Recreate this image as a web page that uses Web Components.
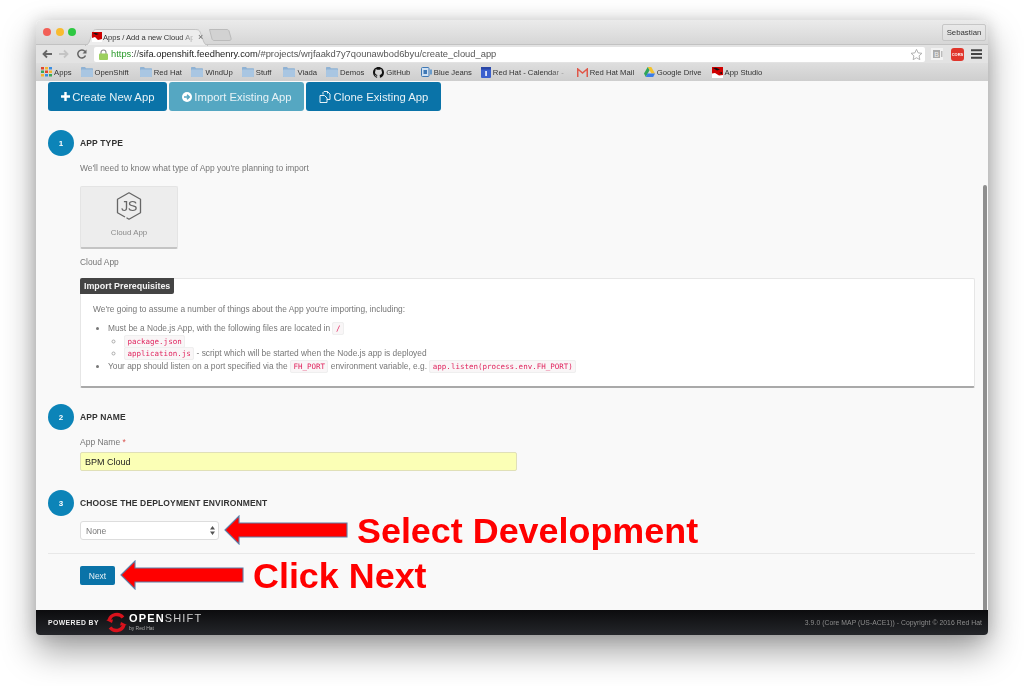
<!DOCTYPE html>
<html lang="en">
<head>
<meta charset="UTF-8">
<title>Apps / Add a new Cloud App</title>
<style>
  html, body { margin: 0; background: #fff; }
  body { width: 1024px; height: 686px; overflow: hidden; font-family: "Liberation Sans", Arial, sans-serif; }
  info-panel ul ul { margin: 0; padding-left: 16px; list-style: circle; }
  info-panel ul ul li::marker { color: #aaa; }
</style>
</head>
<body>
<browser-window>
  <tab-strip slot="chrome"></tab-strip>
  <tool-bar slot="chrome"></tool-bar>
  <bookmark-bar slot="chrome">
    <book-mark icon="apps" style="margin-right:9px">Apps</book-mark>
    <book-mark icon="folder" style="margin-right:11px">OpenShift</book-mark>
    <book-mark icon="folder" style="margin-right:9.5px">Red Hat</book-mark>
    <book-mark icon="folder" style="margin-right:9px">WindUp</book-mark>
    <book-mark icon="folder" style="margin-right:12px">Stuff</book-mark>
    <book-mark icon="folder" style="margin-right:9px">Viada</book-mark>
    <book-mark icon="folder" style="margin-right:9px">Demos</book-mark>
    <book-mark icon="github" style="margin-right:10.5px">GitHub</book-mark>
    <book-mark icon="bluejeans" style="margin-right:9px">Blue Jeans</book-mark>
    <book-mark icon="calendar" style="margin-right:13px" fade>Red Hat - Calendar -</book-mark>
    <book-mark icon="gmail" style="margin-right:9.5px">Red Hat Mail</book-mark>
    <book-mark icon="drive" style="margin-right:10px">Google Drive</book-mark>
    <book-mark icon="redhat">App Studio</book-mark>
  </bookmark-bar>

  <app-page>
    <button-row>
      <action-btn icon="plus">Create New App</action-btn>
      <action-btn icon="circle-arrow" active>Import Existing App</action-btn>
      <action-btn icon="clone">Clone Existing App</action-btn>
    </button-row>

    <step-section num="1" title="App Type" style="margin-top:19px">
      <muted-text style="margin-top:6px">We'll need to know what type of App you're planning to import</muted-text>
      <type-card>Cloud App</type-card>
      <muted-text style="margin-top:7px">Cloud App</muted-text>
      <info-panel heading="Import Prerequisites">
        <p>We're going to assume a number of things about the App you're importing, including:</p>
        <ul>
          <li>Must be a Node.js App, with the following files are located in <code-tag>/</code-tag>
            <ul>
              <li><code-tag>package.json</code-tag></li>
              <li><code-tag>application.js</code-tag> - script which will be started when the Node.js app is deployed</li>
            </ul>
          </li>
          <li>Your app should listen on a port specified via the <code-tag>FH_PORT</code-tag> environment variable, e.g. <code-tag>app.listen(process.env.FH_PORT)</code-tag></li>
        </ul>
      </info-panel>
    </step-section>

    <step-section num="2" title="App Name" style="margin-top:16px">
      <name-field label="App Name" value="BPM Cloud"></name-field>
    </step-section>

    <step-section num="3" title="Choose the Deployment Environment" style="margin-top:19px">
      <env-select value="None"></env-select>
    </step-section>

    <next-row>Next</next-row>

    <red-callout slot="over" tip-x="189" tip-y="449" shaft="108" text-x="321">Select Development</red-callout>
    <red-callout slot="over" tip-x="85" tip-y="494" shaft="108" text-x="217">Click Next</red-callout>
  </app-page>

  <page-footer></page-footer>
</browser-window>

<script>
  function shadow(el, html) {
    el.attachShadow({ mode: 'open' });
    el.shadowRoot.innerHTML = html;
  }

  class BrowserWindow extends HTMLElement {
    constructor() {
      super();
      shadow(this, `
        <style>
          :host {
            display: flex;
            flex-direction: column;
            width: 952px;
            height: 615px;
            margin: 20px 0 0 36px;
            border-radius: 5px 5px 4px 4px;
            box-shadow: 0 16px 34px rgba(0,0,0,.38), 0 0 16px rgba(0,0,0,.14);
          }
          .wrap { display: flex; flex-direction: column; flex: 1; min-height: 0; border-radius: inherit; overflow: hidden; filter: blur(.45px); }
          .chrome { display: block; }
        </style>
        <div class="wrap">
          <div class="chrome"><slot name="chrome"></slot></div>
          <slot></slot>
        </div>`);
    }
  }

  class TabStrip extends HTMLElement {
    constructor() {
      super();
      shadow(this, `
        <style>
          :host {
            display: flex;
            align-items: flex-end;
            position: relative;
            z-index: 1;
            height: 24px;
            background: linear-gradient(#ebebeb, #d6d6d6);
            font-size: 7.800px;
            color: #333;
          }
          .lights { display: flex; gap: 4.500px; margin: 0 0 8px 7px; }
          .lights i { width: 8px; height: 8px; border-radius: 50%; display: block; }
          .tab { position: relative; width: 123px; height: 16px; margin: 0 0 -1px 9px; display: flex; align-items: center; font-size: 7.550px; }
          .tab svg.bg { position: absolute; inset: 0; }
          .fav { position: relative; width: 10px; height: 10px; margin-left: 7px; flex: none; }
          .label { position: relative; width: 90px; margin-left: 1px; white-space: nowrap;
            -webkit-mask-image: linear-gradient(90deg, #000 86%, rgba(0,0,0,.25)); }
          .x { position: relative; margin-left: 5px; font-size: 9px; color: #666; }
          .new { margin: 0 0 3px 1px; display: block; }
          .user { margin: 0 2px 3px auto; width: 44px; height: 17px; box-sizing: border-box; border: 1px solid #c6c6c6; border-radius: 2px;
            display: flex; align-items: center; justify-content: center; background: linear-gradient(#e9e9e9, #dedede); }
        </style>
        <div class="lights">
          <i style="background:#f25f57"></i><i style="background:#f8bb30"></i><i style="background:#2ec842"></i>
        </div>
        <div class="tab">
          <svg class="bg" width="123" height="17" viewBox="0 0 125 17" preserveAspectRatio="none">
            <path d="M0 16.500C3 16 4 14 5 11L8 3C9 1 10 .5 12 .5H112C115 .5 116 1 117 3L120 11C121 14 122 16 125 16.500V17H0Z" fill="#ededed" stroke="#b9b9b9" stroke-width=".8"/>
            <rect x="1" y="16" width="123" height="1" fill="#e3e3e3"/>
          </svg>
          <svg class="fav" viewBox="0 0 10 10"><rect width="10" height="10" fill="#fff"/><path d="M0 0H10V7L6 8 3 5 0 6Z" fill="#c00"/><path d="M1 1 4 3 7 2 4 1Z" fill="#111"/></svg>
          <span class="label">Apps / Add a new Cloud Ap</span>
          <span class="x">&#215;</span>
        </div>
        <svg class="new" width="23" height="12" viewBox="0 0 23 12"><path d="M.5 .5H18C19 .5 19.500 1 20 2L22 9C22.400 10.500 22 11.500 20 11.500H5C4 11.500 3.500 11 3 10Z" fill="#d2d2d2" stroke="#bbb"/></svg>
        <div class="user">Sebastian</div>`);
    }
  }

  class ToolBar extends HTMLElement {
    constructor() {
      super();
      shadow(this, `
        <style>
          :host {
            display: flex;
            align-items: center;
            height: 19px;
            background: #e3e3e3;
            border-top: 1px solid #c2c2c2;
            box-sizing: border-box;
          }
          svg { display: block; flex: none; }
          .url {
            position: relative;
            display: flex;
            align-items: center;
            width: 831px;
            height: 15px;
            margin-left: 7px;
            background: #fff;
            border-radius: 2px;
            box-sizing: border-box;
            padding-left: 5px;
            font-size: 9.350px;
            color: #555;
            white-space: nowrap;
          }
          .url b { font-weight: normal; color: #2a9a2a; }
          .url em { font-style: normal; color: #222; }
          .url .star { position: absolute; right: 2px; top: 1px; }
        </style>
        <svg style="margin-left:6px" width="10" height="10" viewBox="0 0 10 10"><path d="M10 5H2M5 1.500 1.500 5 5 8.500" fill="none" stroke="#666" stroke-width="1.800"/></svg>
        <svg style="margin-left:7px" width="10" height="10" viewBox="0 0 10 10"><path d="M0 5H8M5 1.500 8.500 5 5 8.500" fill="none" stroke="#c4c4c4" stroke-width="1.800"/></svg>
        <svg style="margin-left:8px" width="10" height="10" viewBox="0 0 10 10"><path d="M8.500 6.500A4 4 0 1 1 8 2.500" fill="none" stroke="#666" stroke-width="1.500"/><path d="M9.500 .5V4.500H5.500Z" fill="#666"/></svg>
        <div class="url">
          <svg width="9" height="11" viewBox="0 0 9 11"><path d="M2 5V3.500A2.500 2.500 0 0 1 7 3.500V5" fill="none" stroke="#8a8a8a" stroke-width="1.100"/><rect y="4.500" width="9" height="6.500" rx="1" fill="#9ccf5f"/></svg>
          <span style="margin-left:3px"><b>https</b>://<em>sifa.openshift.feedhenry.com</em>/#projects/wrjfaakd7y7qounawbod6byu/create_cloud_app</span>
          <svg class="star" width="13" height="13" viewBox="0 0 24 24"><path d="M12 2.500 15 9l7 .8-5.200 4.700 1.400 7-6.200-3.500L5.800 21.500l1.400-7L2 9.800 9 9Z" fill="#fff" stroke="#aaa" stroke-width="1.700"/></svg>
        </div>
        <svg style="margin-left:6px" width="12" height="12" viewBox="0 0 12 12"><rect width="12" height="12" fill="#f2f2f2"/><rect x="2" y="2" width="7" height="8" fill="#aaa"/><text x="5.500" y="8.500" text-anchor="middle" font-family="Liberation Sans, sans-serif" font-size="7" fill="#eee">B</text><rect x="10" y="3" width="1.500" height="6" fill="#bbb"/></svg>
        <svg style="margin-left:8px" width="13" height="13" viewBox="0 0 13 13"><rect width="13" height="13" rx="3" fill="#e0352b"/><text x="6.500" y="8.200" text-anchor="middle" font-family="Liberation Sans, sans-serif" font-size="4" font-weight="bold" fill="#fff">CORS</text></svg>
        <svg style="margin-left:7px" width="11" height="10" viewBox="0 0 11 10"><path d="M0 1.250H11M0 5H11M0 8.750H11" stroke="#444" stroke-width="1.800"/></svg>`);
    }
  }

  class BookmarkBar extends HTMLElement {
    constructor() {
      super();
      shadow(this, `
        <style>
          :host {
            display: flex;
            align-items: center;
            height: 18px;
            padding-left: 5px;
            background: linear-gradient(#dedede, #cecece);
            font-size: 7.700px;
            color: #333;
            white-space: nowrap;
          }
        </style>
        <slot></slot>`);
    }
  }

  const BOOKMARK_ICONS = {
    apps: `<svg width="11" height="10" viewBox="0 0 11 10"><g>
      <rect width="3" height="2.500" fill="#e0452c"/><rect x="4" width="3" height="2.500" fill="#f3b52f"/><rect x="8" width="3" height="2.500" fill="#3a8de0"/>
      <rect y="3.500" width="3" height="2.500" fill="#3aa757"/><rect x="4" y="3.500" width="3" height="2.500" fill="#e0452c"/><rect x="8" y="3.500" width="3" height="2.500" fill="#f3b52f"/>
      <rect y="7" width="3" height="2.500" fill="#f3b52f"/><rect x="4" y="7" width="3" height="2.500" fill="#3a8de0"/><rect x="8" y="7" width="3" height="2.500" fill="#3aa757"/></g></svg>`,
    folder: `<svg width="12" height="10" viewBox="0 0 12 10"><path d="M0 1C0 .4.400 0 1 0H4L5 1.200H11C11.600 1.200 12 1.600 12 2.200V9.200C12 9.700 11.600 10 11 10H1C.4 10 0 9.700 0 9.200Z" fill="#8fb2d4"/><rect y="2.500" width="12" height="7.500" rx="1" fill="#a9c6e2"/></svg>`,
    github: `<svg width="11" height="11" viewBox="0 0 16 16"><path fill="#111" d="M8 0C3.580 0 0 3.580 0 8c0 3.540 2.290 6.530 5.470 7.590.4.070.55-.17.55-.38 0-.19-.01-.82-.01-1.490-2.010.37-2.530-.49-2.690-.94-.09-.23-.48-.94-.82-1.130-.28-.15-.68-.52-.01-.53.63-.01 1.080.58 1.230.82.720 1.210 1.870.87 2.330.66.070-.52.280-.87.510-1.070-1.780-.2-3.640-.89-3.640-3.950 0-.87.310-1.590.820-2.150-.08-.2-.36-1.020.08-2.120 0 0 .67-.21 2.200.82.640-.18 1.320-.27 2-.27s1.360.09 2 .27c1.530-1.040 2.200-.82 2.200-.82.440 1.100.160 1.920.080 2.120.51.560.82 1.270.82 2.150 0 3.070-1.870 3.750-3.650 3.950.29.250.54.730.54 1.480 0 1.070-.01 1.930-.01 2.200 0 .21.150.46.550.38A8.010 8.010 0 0 0 16 8c0-4.420-3.580-8-8-8z"/></svg>`,
    bluejeans: `<svg width="11" height="10" viewBox="0 0 11 10"><rect x=".5" y=".5" width="7.500" height="9" rx="1" fill="#cfe0f2" stroke="#3f78b5"/><rect x="2.500" y="3" width="3.500" height="4" fill="#3f78b5"/><rect x="9" y="2.500" width="2" height="5" fill="#6a9ccc"/></svg>`,
    calendar: `<svg width="10" height="11" viewBox="0 0 10 11"><rect width="10" height="11" rx="1" fill="#3a5fcd"/><rect y="0" width="10" height="2.500" fill="#2a47a6"/><rect x="4.300" y="4" width="1.500" height="5" fill="#fff"/></svg>`,
    gmail: `<svg width="11" height="9" viewBox="0 0 11 9"><path d="M.75 9V1L5.500 5 10.250 1V9" fill="none" stroke="#e0584a" stroke-width="1.500"/></svg>`,
    drive: `<svg width="11" height="10" viewBox="0 0 11 10"><path d="M3.700 0H7.300L11 6.500H7.400Z" fill="#f4c32c"/><path d="M3.700 0 0 6.500 1.800 10 5.500 3.300Z" fill="#2fa55a"/><path d="M3.500 6.500H11L9.200 10H1.800Z" fill="#3b7de8"/></svg>`,
    redhat: `<svg width="11" height="11" viewBox="0 0 11 11"><rect width="11" height="11" fill="#fff"/><path d="M0 0H11V8L7 8.500 3 6 0 6.500Z" fill="#d00000"/><path d="M1 1 5 3.500 8 2.500 4 .8ZM7 6 10 7 10 5Z" fill="#111"/></svg>`
  };

  class BookMark extends HTMLElement {
    constructor() {
      super();
      const icon = BOOKMARK_ICONS[this.getAttribute('icon')] || '';
      shadow(this, `
        <style>
          :host { display: inline-flex; align-items: center; gap: 2px; }
          svg { display: block; flex: none; }
          :host([fade]) span { -webkit-mask-image: linear-gradient(90deg, #000 80%, rgba(0,0,0,.3)); }
        </style>
        ${icon}<span><slot></slot></span>`);
    }
  }

  class AppPage extends HTMLElement {
    constructor() {
      super();
      shadow(this, `
        <style>
          :host {
            display: flex;
            flex: 1;
            min-height: 0;
            position: relative;
            background: #f9f9f9;
          }
          .main { flex: 1; min-width: 0; padding: 1px 0 0 12px; box-sizing: border-box; color: #777; }
          .track { width: 5px; position: relative; }
          .thumb { position: absolute; left: 0; right: 1px; top: 104px; bottom: 0; background: #8f8f8f; border-radius: 3px 3px 0 0; }
        </style>
        <div class="main"><slot></slot></div>
        <div class="track"><div class="thumb"></div></div>
        <slot name="over"></slot>`);
    }
  }

  class ButtonRow extends HTMLElement {
    constructor() {
      super();
      shadow(this, `<style>:host { display: flex; gap: 2px; }</style><slot></slot>`);
    }
  }

  const BTN_ICONS = {
    plus: `<svg width="9" height="9" viewBox="0 0 9 9"><path d="M4.500 0V9M0 4.500H9" stroke="#fff" stroke-width="2.400"/></svg>`,
    'circle-arrow': `<svg width="10" height="10" viewBox="0 0 10 10"><circle cx="5" cy="5" r="5" fill="#fff"/><path d="M2 5H7M5 2.700 7.300 5 5 7.300" fill="none" stroke="#55a7c2" stroke-width="1.500"/></svg>`,
    clone: `<svg width="12" height="12" viewBox="0 0 12 12"><g fill="none" stroke="#fff" stroke-width=".9"><path d="M4 3.500V1.500L5 .5H8.500V2.500M8.500 .5 11 3V8.500H8"/><path d="M1 4.500H5.500L8 7V11.500H1Z"/></g></svg>`
  };

  class ActionBtn extends HTMLElement {
    constructor() {
      super();
      shadow(this, `
        <style>
          :host {
            display: inline-flex;
            align-items: center;
            gap: 2.500px;
            height: 29px;
            padding: 0 12.700px;
            background: #0a73a8;
            color: #e6f1f6;
            border-radius: 3px;
            font-size: 11.300px;
            white-space: nowrap;
          }
          :host([active]) { background: #55a7c2; color: #e6f2f6; }
          svg { display: block; }
        </style>
        ${BTN_ICONS[this.getAttribute('icon')]}<slot></slot>`);
    }
  }

  class StepSection extends HTMLElement {
    constructor() {
      super();
      shadow(this, `
        <style>
          :host {
            display: grid;
            grid-template-columns: 26px 1fr;
            column-gap: 6px;
            margin-right: 8px;
          }
          .num {
            width: 26px;
            height: 26px;
            border-radius: 50%;
            background: #0c84b8;
            color: #fff;
            font-size: 8px;
            font-weight: bold;
            display: flex;
            align-items: center;
            justify-content: center;
          }
          .title {
            font-size: 8.500px;
            font-weight: bold;
            letter-spacing: .14px;
            text-transform: uppercase;
            color: #333;
            line-height: 26px;
          }
          .body { grid-column: 2; min-width: 0; }
        </style>
        <div class="num">${this.getAttribute('num')}</div>
        <div class="title">${this.getAttribute('title')}</div>
        <div class="body"><slot></slot></div>`);
    }
  }

  class MutedText extends HTMLElement {
    constructor() {
      super();
      shadow(this, `<style>:host { display: block; font-size: 8.420px; line-height: 12px; color: #777; }</style><slot></slot>`);
    }
  }

  class TypeCard extends HTMLElement {
    constructor() {
      super();
      shadow(this, `
        <style>
          :host {
            display: flex;
            flex-direction: column;
            align-items: center;
            box-sizing: border-box;
            width: 98px;
            height: 63px;
            margin-top: 12px;
            padding-top: 5px;
            background: #ededed;
            border: 1px solid #e4e4e4;
            border-bottom: 2px solid #c4c4c4;
            border-radius: 2px;
            font-size: 7.900px;
            color: #8a8a8a;
          }
          svg { display: block; }
          span { margin-top: 8px; }
        </style>
        <svg width="26" height="28" viewBox="0 0 26 28">
          <path d="M9 25 1.500 20.800V7.300L13 .8 24.500 7.300V20.800L13 27.200 10.500 25.800" fill="none" stroke="#666" stroke-width="1.300" stroke-linejoin="round"/>
          <text x="13" y="19.200" text-anchor="middle" font-family="Liberation Sans, sans-serif" font-size="14.500" letter-spacing="-.5" fill="#666">JS</text>
        </svg>
        <span><slot></slot></span>`);
    }
  }

  class InfoPanel extends HTMLElement {
    constructor() {
      super();
      shadow(this, `
        <style>
          :host {
            display: block;
            box-sizing: border-box;
            height: 110px;
            margin-top: 10px;
            background: #fff;
            border: 1px solid #e6e6e6;
            border-bottom: 2px solid #a9a9a9;
            border-radius: 2px;
            font-size: 8.370px;
            color: #777;
          }
          .badge {
            display: inline-block;
            height: 16px;
            line-height: 16px;
            padding: 0 4px;
            margin: -1px 0 0 -1px;
            background: #444;
            color: #f4f4f4;
            font-size: 8.900px;
            font-weight: bold;
            border-radius: 2px 0 2px 0;
            vertical-align: top;
          }
          ::slotted(p) { margin: 9px 0 0 12px; line-height: 12px; }
          ::slotted(ul) { margin: 7px 0 0 12px; padding-left: 15px; line-height: 12.600px; }
        </style>
        <div class="badge">${this.getAttribute('heading')}</div>
        <slot></slot>`);
    }
  }

  class CodeTag extends HTMLElement {
    constructor() {
      super();
      shadow(this, `
        <style>
          :host {
            display: inline;
            font-family: "DejaVu Sans Mono", "Liberation Mono", monospace;
            font-size: 7.500px;
            line-height: 0;
            padding: 1px 2.500px;
            color: #e0245e;
            background: #f9f6f7;
            border: 1px solid #efefef;
            border-radius: 2px;
          }
        </style>
        <slot></slot>`);
    }
  }

  class NameField extends HTMLElement {
    constructor() {
      super();
      shadow(this, `
        <style>
          :host { display: block; margin-top: 6px; font-size: 8.500px; color: #777; }
          label { display: block; line-height: 12px; }
          label i { font-style: normal; color: #d9534f; }
          input {
            display: block;
            box-sizing: border-box;
            width: 437px;
            height: 19px;
            margin-top: 4px;
            padding: 0 4px;
            background: #fbffb6;
            border: 1px solid #e0e0b8;
            border-radius: 2px;
            font: 9px "Liberation Sans", Arial, sans-serif;
            color: #222;
          }
        </style>
        <label>${this.getAttribute('label')} <i>*</i></label>
        <input type="text" value="${this.getAttribute('value')}">`);
    }
  }

  class EnvSelect extends HTMLElement {
    constructor() {
      super();
      shadow(this, `
        <style>
          :host {
            display: flex;
            align-items: center;
            justify-content: space-between;
            box-sizing: border-box;
            width: 139px;
            height: 19px;
            margin-top: 5px;
            padding: 0 3px 0 5px;
            background: #fff;
            border: 1px solid #ddd;
            border-radius: 3px;
            font-size: 8.500px;
            color: #777;
          }
          svg { display: block; }
        </style>
        <span>${this.getAttribute('value')}</span>
        <svg width="5" height="9" viewBox="0 0 5 9"><path d="M2.500 0 5 3.500H0ZM2.500 9 5 5.500H0Z" fill="#555"/></svg>`);
    }
  }

  class NextRow extends HTMLElement {
    constructor() {
      super();
      shadow(this, `
        <style>
          :host {
            display: block;
            margin: 13px 8px 0 0;
            padding: 12px 0 0 32px;
            border-top: 1px solid #e8e8e8;
          }
          span {
            display: flex;
            align-items: center;
            justify-content: center;
            width: 35px;
            height: 19px;
            background: #0a73a8;
            color: #e6f1f6;
            border-radius: 2px;
            font-size: 8.500px;
          }
        </style>
        <span><slot></slot></span>`);
    }
  }

  // red annotation drawn over the screenshot: arrow plus label
  class RedCallout extends HTMLElement {
    constructor() {
      super();
      const x = +this.getAttribute('tip-x');
      const y = +this.getAttribute('tip-y');
      const len = +this.getAttribute('shaft') + 14;
      const textX = +this.getAttribute('text-x');
      shadow(this, `
        <style>
          :host { display: block; position: absolute; left: 0; top: 0; }
          svg { position: absolute; left: ${x - 1}px; top: ${y - 15}px; }
          span {
            position: absolute;
            left: ${textX}px;
            top: ${y - 20}px;
            font: bold 35.900px/42px "Liberation Sans", Arial, sans-serif;
            color: #f00;
            white-space: nowrap;
          }
        </style>
        <svg width="${len + 2}" height="30" viewBox="0 0 ${len + 2} 30">
          <path d="M1 15 15 1V8H${len + 1}V22H15V29Z" fill="#f00" stroke="#5d7fa8" stroke-width="1.100"/>
        </svg>
        <span><slot></slot></span>`);
    }
  }

  class PageFooter extends HTMLElement {
    constructor() {
      super();
      shadow(this, `
        <style>
          :host {
            display: flex;
            align-items: center;
            flex: none;
            height: 25px;
            padding: 0 6px 0 12px;
            background: linear-gradient(#0c0c0e, #24262a);
            color: #eee;
          }
          .by { font-size: 6.800px; font-weight: bold; letter-spacing: .45px; white-space: nowrap; }
          svg { display: block; margin-left: 7px; }
          .logo { margin-left: 2px; line-height: 1; }
          .name { display: block; font-size: 11px; letter-spacing: 1.150px; color: #fff; font-weight: bold; margin-top: -1px; }
          .name i { font-style: normal; font-weight: normal; color: #ccc; }
          .small { display: block; font-size: 5px; color: #aaa; margin-top: 2px; }
          .ver { margin-left: auto; font-size: 6.800px; color: #8d8d8d; white-space: nowrap; letter-spacing: .05px; }
        </style>
        <span class="by">POWERED BY</span>
        <svg width="21" height="21" viewBox="0 0 21 21">
          <g fill="none" stroke="#d8121c" stroke-width="3.400">
            <path d="M3 8.500A8 8 0 0 1 17 5.500"/>
            <path d="M18 12.500A8 8 0 0 1 4 15.500"/>
          </g>
          <path d="M0 8 7 7.500 6 11ZM21 13 14 13.500 15 10Z" fill="#d8121c"/>
        </svg>
        <span class="logo"><span class="name">OPEN<i>SHIFT</i></span><span class="small">by Red Hat</span></span>
        <span class="ver">3.9.0 (Core MAP (US-ACE1)) - Copyright &#169; 2016 Red Hat</span>`);
    }
  }

  customElements.define('browser-window', BrowserWindow);
  customElements.define('tab-strip', TabStrip);
  customElements.define('tool-bar', ToolBar);
  customElements.define('bookmark-bar', BookmarkBar);
  customElements.define('book-mark', BookMark);
  customElements.define('app-page', AppPage);
  customElements.define('button-row', ButtonRow);
  customElements.define('action-btn', ActionBtn);
  customElements.define('step-section', StepSection);
  customElements.define('muted-text', MutedText);
  customElements.define('type-card', TypeCard);
  customElements.define('info-panel', InfoPanel);
  customElements.define('code-tag', CodeTag);
  customElements.define('name-field', NameField);
  customElements.define('env-select', EnvSelect);
  customElements.define('next-row', NextRow);
  customElements.define('red-callout', RedCallout);
  customElements.define('page-footer', PageFooter);
</script>
</body>
</html>
